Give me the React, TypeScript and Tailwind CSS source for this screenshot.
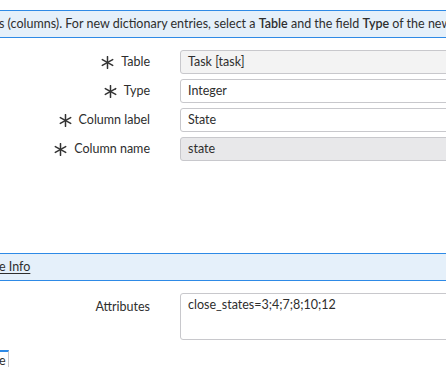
import React from 'react';

function Required() {
  return (
    <svg width="13" height="13" viewBox="0 0 12 12" className="shrink-0 text-[#333]">
      <g stroke="currentColor" strokeWidth="1.4" strokeLinecap="round">
        <line x1="6" y1="0.6" x2="6" y2="11.4" />
        <line x1="1.2" y1="3.3" x2="10.8" y2="8.7" />
        <line x1="1.2" y1="8.7" x2="10.8" y2="3.3" />
      </g>
    </svg>
  );
}

const fields = [
  { label: 'Table', value: 'Task [task]', bg: 'bg-[#f3f3f3]' },
  { label: 'Type', value: 'Integer', bg: 'bg-white' },
  { label: 'Column label', value: 'State', bg: 'bg-white' },
  { label: 'Column name', value: 'state', bg: 'bg-[#e8e8ea]' },
];

function App() {
  return (
    <div className="w-[446px] h-[367px] overflow-hidden bg-white text-[12.5px] text-[#2e2e2e] font-['Lato','Liberation_Sans',sans-serif]">
      <div className="mt-[10px] h-[28px] border-y border-[#2e8ae6] bg-[#e5f0fa] flex items-center whitespace-nowrap overflow-hidden">
        <span className="-ml-[1px]">
          s (columns). For new dictionary entries, select a <b className="font-semibold">Table</b> and the field{' '}
          <b className="font-semibold">Type</b> of the new
        </span>
      </div>

      <div className="mt-[12px] flex flex-col gap-[5px]">
        {fields.map((f) => (
          <div key={f.label} className="flex items-center">
            <div className="w-[150px] shrink-0 flex items-center justify-end gap-[7px]">
              <Required />
              <span>{f.label}</span>
            </div>
            <div
              className={`ml-[30px] h-[24px] w-[300px] shrink-0 rounded-[3px] border border-[#c8c8cc] pl-[7px] flex items-center ${f.bg}`}
            >
              {f.value}
            </div>
          </div>
        ))}
      </div>

      <div className="mt-[92px] h-[28px] border-y border-[#2e8ae6] bg-[#e5f0fa] flex items-center whitespace-nowrap">
        <span className="underline underline-offset-2 -ml-[1px]">e Info</span>
      </div>

      <div className="mt-[12px] flex items-start">
        <div className="w-[150px] shrink-0 text-right pt-[5px]">Attributes</div>
        <div className="ml-[30px] h-[47px] w-[300px] shrink-0 rounded-[3px] border border-[#c8c8cc] pl-[7px] pt-[2px]">
          close_states=3;4;7;8;10;12
        </div>
      </div>

      <div className="mt-[10px] w-[9px] h-[20px] border-t-2 border-t-[#2e8ae6] border-r border-r-[#c8c8cc] overflow-hidden leading-[18px]">
        <span className="-ml-[1px]">e</span>
      </div>
    </div>
  );
}

export default App;
